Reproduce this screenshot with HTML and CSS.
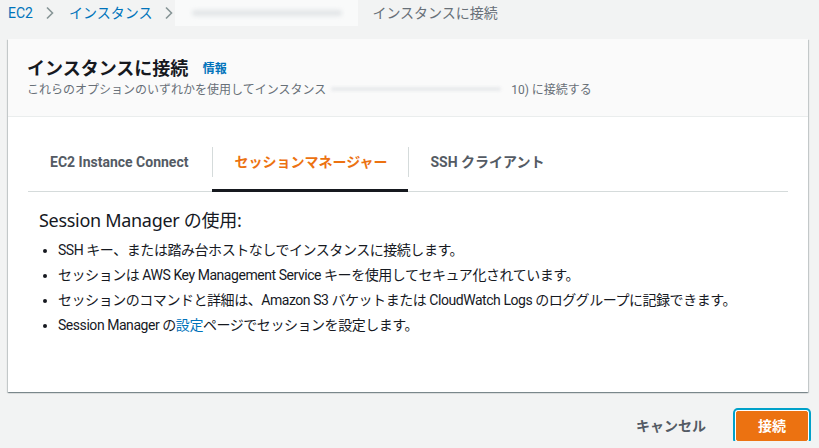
FILE: index.html
```html
<!DOCTYPE html>
<html lang="ja">
<head>
    <meta charset="UTF-8">
    <meta name="viewport" content="width=device-width, initial-scale=1.0">
    <title>インスタンスに接続</title>
    <link rel="stylesheet" href="styles.css">
</head>
<body>
    <nav class="breadcrumbs">
        <a href="#">EC2</a>
        <svg class="chevron" width="8" height="14" viewBox="0 0 8 14"><path d="M1 1.5 L6.5 7 L1 12.5" fill="none" stroke="#879596" stroke-width="1.6"/></svg>
        <a href="#">インスタンス</a>
        <svg class="chevron" width="8" height="14" viewBox="0 0 8 14"><path d="M1 1.5 L6.5 7 L1 12.5" fill="none" stroke="#879596" stroke-width="1.6"/></svg>
        <span class="masked"><span class="smear"></span></span>
        <span class="current">インスタンスに接続</span>
    </nav>

    <div class="card">
        <div class="card-header">
            <h1>インスタンスに接続 <a href="#" class="info">情報</a></h1>
            <p class="subtitle">これらのオプションのいずれかを使用してインスタンス<span class="smear-inline"></span>10) に接続する</p>
        </div>
        <div class="card-body">
            <div class="tabs">
                <div class="tab"><span class="tab-label">EC2 Instance Connect</span></div>
                <div class="tab active"><span class="tab-label">セッションマネージャー</span></div>
                <div class="tab"><span class="tab-label">SSH クライアント</span></div>
            </div>
            <div class="tab-content">
                <h2>Session Manager の使用:</h2>
                <ul>
                    <li>SSH キー、または踏み台ホストなしでインスタンスに接続します。</li>
                    <li>セッションは AWS Key Management Service キーを使用してセキュア化されています。</li>
                    <li>セッションのコマンドと詳細は、Amazon S3 バケットまたは CloudWatch Logs のロググループに記録できます。</li>
                    <li>Session Manager の<a href="#">設定</a>ページでセッションを設定します。</li>
                </ul>
            </div>
        </div>
    </div>

    <div class="actions">
        <button class="btn-link">キャンセル</button>
        <button class="btn-primary">接続</button>
    </div>
</body>
</html>
```
FILE: styles.css
```css
body {
    margin: 0;
    background-color: #f2f3f3;
    color: #16191f;
    font-family: Roboto, "Noto Sans CJK JP", sans-serif;
}
a {
    color: #0073bb;
    text-decoration: none;
}
.breadcrumbs {
    display: flex;
    align-items: center;
    height: 26px;
    padding: 0 8px;
    font-size: 14px;
    line-height: 26px;
}
.chevron {
    margin: 0 15px 0 13px;
}
.chevron:nth-of-type(2) {
    margin-right: 2px;
}
.masked {
    display: flex;
    align-items: center;
    justify-content: center;
    width: 183px;
    height: 26px;
    background-color: #f9fafa;
}
.smear {
    width: 150px;
    height: 6px;
    border-radius: 3px;
    background-color: #e2e5e7;
    filter: blur(2px);
}
.current {
    margin-left: 14px;
    color: #687078;
}
.card {
    width: 800px;
    margin: 13px 0 0 8px;
    background-color: #fff;
    box-shadow: 0 1px 1px 0 rgba(0, 28, 36, 0.3), 1px 1px 1px 0 rgba(0, 28, 36, 0.15), -1px 1px 1px 0 rgba(0, 28, 36, 0.15);
}
.card-header {
    padding: 19px 19px 18px;
    background-color: #fafafa;
    border-bottom: 1px solid #eaeded;
}
h1 {
    height: 22px;
    margin: 0;
    font-size: 18px;
    line-height: 22px;
    font-weight: bold;
}
.info {
    margin-left: 10px;
    font-size: 12px;
    font-weight: bold;
    vertical-align: 2px;
}
.subtitle {
    height: 16px;
    margin: 2px 0 0;
    font-size: 12px;
    line-height: 16px;
    color: #687078;
}
.smear-inline {
    display: inline-block;
    width: 170px;
    height: 4px;
    margin: 0 10px 0 5px;
    border-radius: 2px;
    background-color: #e8eaec;
    filter: blur(1.5px);
    vertical-align: 3px;
}
.card-body {
    padding: 20px 20px 54px;
}
.tabs {
    display: flex;
    border-bottom: 1px solid #d5dbdb;
}
.tab {
    position: relative;
    padding: 10px 0 14px;
}
.tab-label {
    display: block;
    height: 20px;
    padding: 5px 21px;
    line-height: 20px;
    font-size: 14px;
    font-weight: bold;
    color: #545b64;
    border-left: 1px solid #d5dbdb;
}
.tab:first-child .tab-label {
    border-left: none;
    padding-left: 22px;
    padding-right: 24px;
}
.tab.active .tab-label {
    color: #ec7211;
}
.tab.active::after {
    content: "";
    position: absolute;
    left: 0;
    right: 0;
    bottom: -1px;
    height: 3px;
    background-color: #16191f;
}
.tab-content {
    padding: 0 11px;
}
h2 {
    height: 24px;
    margin: 16px 0 0;
    font-family: "Noto Sans", "Noto Sans CJK JP", sans-serif;
    font-size: 18px;
    line-height: 24px;
    font-weight: normal;
    letter-spacing: -0.3px;
}
ul {
    margin: 6px 0 0;
    padding-left: 19px;
    font-size: 14px;
    line-height: 25px;
    letter-spacing: -0.45px;
}
li {
    height: 25px;
}
.actions {
    display: flex;
    justify-content: flex-end;
    width: 800px;
    margin: 19px 0 0 8px;
}
.btn-link {
    height: 30px;
    padding: 4px 20px;
    border: none;
    background: none;
    font-family: inherit;
    font-size: 14px;
    line-height: 20px;
    font-weight: bold;
    color: #545b64;
}
.btn-primary {
    height: 30px;
    margin-left: 10px;
    padding: 4px 21px;
    border: 1px solid #ec7211;
    border-radius: 2px;
    background-color: #ec7211;
    color: #fff;
    font-family: inherit;
    font-size: 14px;
    line-height: 20px;
    font-weight: bold;
    box-shadow: 0 0 0 1px #fff, 0 0 0 3px #00a1c9;
}
```
